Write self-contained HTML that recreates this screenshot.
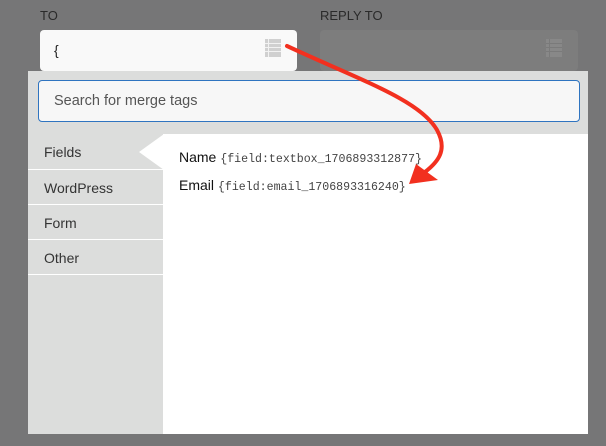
<!DOCTYPE html>
<html><head><style>
*{margin:0;padding:0;box-sizing:border-box}
body{width:606px;height:446px;background:#767677;position:relative;overflow:hidden;font-family:"Liberation Sans",sans-serif}
.lbl{position:absolute;top:8px;font-size:13px;color:#2a2a2a}
.box{position:absolute;top:30px;height:41px;border-radius:4px}
.panel{position:absolute;left:28px;top:71px;width:560px;height:363px;background:#dcdddc}
.search{position:absolute;left:10px;top:9px;width:542px;height:42px;border:1px solid #2f74c0;border-radius:4px;background:#f7f7f7;font-size:14.5px;color:#555;padding:12px 0 0 15px}
.side div{position:absolute;left:0;width:135px;height:35px;border-bottom:1px solid #fff;font-size:14px;color:#333;padding:10px 0 0 16px}
.content{position:absolute;left:135px;top:63px;width:425px;height:300px;background:#fff}
.row{position:absolute;left:16px;font-size:14px;color:#111}
.row span{font-family:"Liberation Mono",monospace;font-size:11.6px;color:#444}
</style></head><body>
<div class="lbl" style="left:40px">TO</div>
<div class="lbl" style="left:320px">REPLY TO</div>
<div class="box" style="left:40px;width:257px;background:#f9f9f9"><span style="position:absolute;left:14px;top:12px;font-size:14px;color:#222">{</span></div>
<div class="box" style="left:320px;width:258px;background:#7d7d7d"></div>
<svg style="position:absolute;left:265px;top:39px" width="16" height="18"><g fill="#d0d0d0"><rect x="0" y="0" width="16" height="18"/></g><g stroke="#f2f2f2" stroke-width="1"><line x1="0" y1="4.5" x2="16" y2="4.5"/><line x1="0" y1="8.5" x2="16" y2="8.5"/><line x1="0" y1="12.5" x2="16" y2="12.5"/><line x1="3.5" y1="0" x2="3.5" y2="18"/></g></svg>
<svg style="position:absolute;left:546px;top:39px" width="16" height="18"><rect width="16" height="18" fill="#888"/><g stroke="#7a7a7a"><line x1="0" y1="4.5" x2="16" y2="4.5"/><line x1="0" y1="8.5" x2="16" y2="8.5"/><line x1="0" y1="12.5" x2="16" y2="12.5"/><line x1="3.5" y1="0" x2="3.5" y2="18"/></g></svg>
<div class="panel">
<div class="search">Search for merge tags</div>
<div class="side">
<div style="top:63px;height:36px">Fields</div>
<div style="top:99px">WordPress</div>
<div style="top:134px">Form</div>
<div style="top:169px">Other</div>
</div>
<div class="content">
<div class="row" style="top:15px">Name <span>{field:textbox_1706893312877}</span></div>
<div class="row" style="top:43px">Email <span>{field:email_1706893316240}</span></div>
</div>
<svg style="position:absolute;left:111px;top:63px" width="25" height="38"><polygon points="25,0 0,18 25,36" fill="#fff"/></svg>
</div>
<svg style="position:absolute;left:0;top:0" width="606" height="446">
<path d="M287,46 C360,80 420,100 437,130 C448,150 438,162 425,172" fill="none" stroke="#f2301f" stroke-width="4" stroke-linecap="round"/>
<polygon points="409,184 416,164 438,180" fill="#f2301f"/>
</svg>
</body></html>
